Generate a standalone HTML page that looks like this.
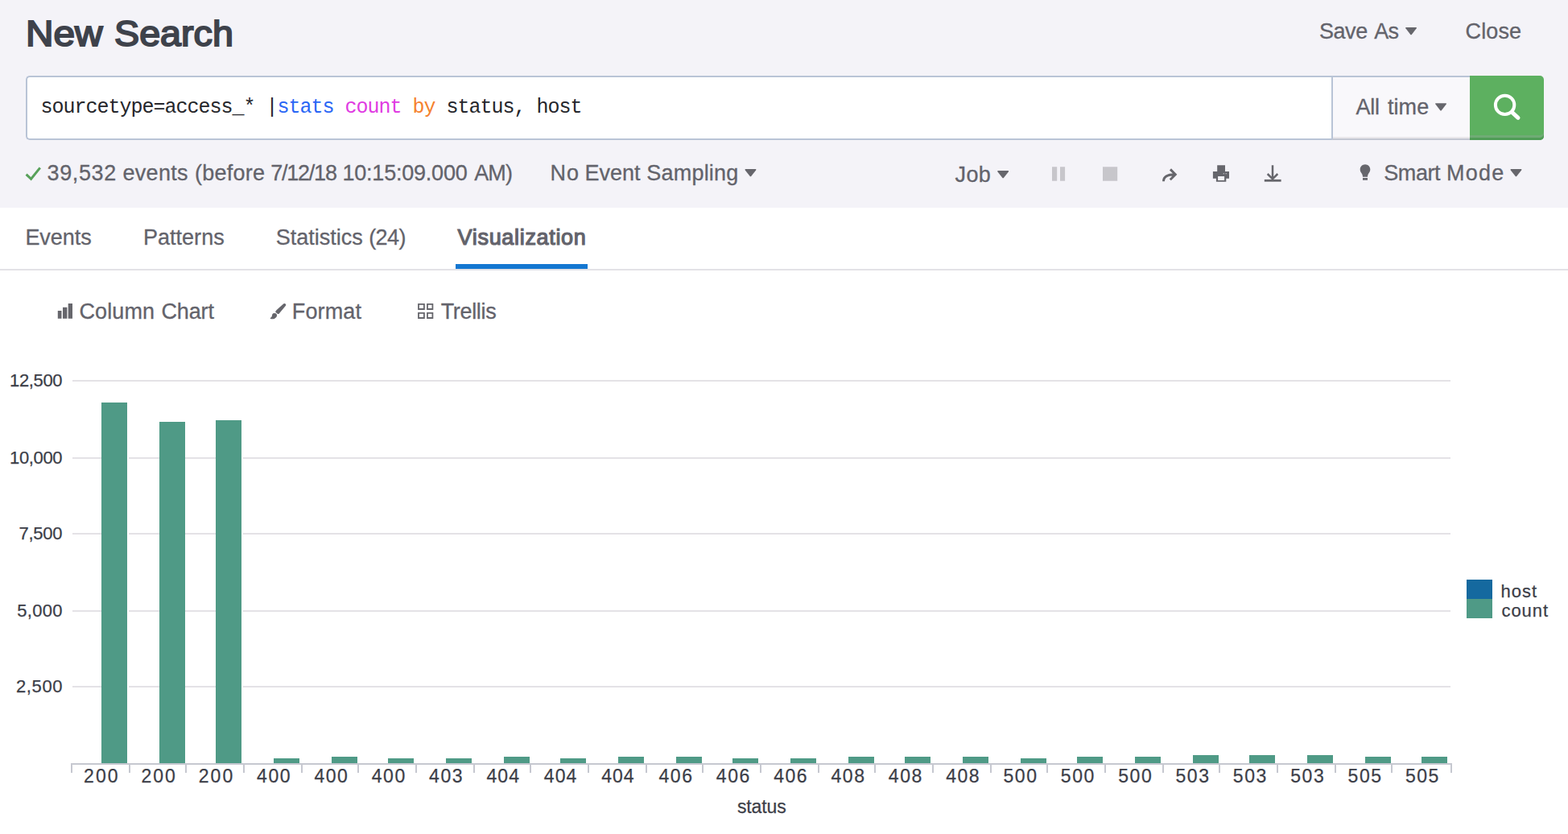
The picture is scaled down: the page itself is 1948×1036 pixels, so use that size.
<!DOCTYPE html>
<html lang="en">
<head>
<meta charset="utf-8">
<title>New Search</title>
<style>
*{box-sizing:border-box}
html,body{margin:0;padding:0}
body{width:1948px;height:1036px;overflow:hidden;background:#fff;font-family:"Liberation Sans", sans-serif;color:#63636b;position:relative}
#app{position:absolute;left:0;top:0;width:1948px;height:1036px;overflow:hidden}
.hdr{position:absolute;left:0;top:0;width:1948px;height:258px;background:#f4f3f8}
.t{position:absolute;margin:0;padding:0;line-height:1;white-space:nowrap;font-weight:400;color:#63636b;text-decoration:none;-webkit-text-stroke:.3px currentColor}
.g{left:0}
.w{position:absolute;top:0;white-space:nowrap;transform-origin:0 0}
h1.t{color:#3e424b;-webkit-text-stroke:2px currentColor}
.active{-webkit-text-stroke:1.2px currentColor}
.icons{position:absolute;left:0;top:0;display:block;pointer-events:none}
.searchbar{position:absolute;left:32px;top:94px;width:1886px;height:80px}
.sb-input{position:absolute;left:0;top:0;width:1624px;height:80px;background:#fff;border:2px solid #b9c4d6;border-right:0;border-radius:5px 0 0 5px}
.sb-time{position:absolute;left:1622px;top:0;width:172px;height:80px;background:#f9f8fb;border:2px solid #b9c4d6;border-right:0;border-bottom-color:#c3c7d2;box-shadow:inset 0 -2px 0 #e9e7ea}
.sb-go{position:absolute;left:1794px;top:0;width:92px;height:80px;background:#5db060;border:0;border-radius:0 5px 5px 0;box-shadow:inset 0 -3px 0 #4f9d56,inset 0 -6px 0 #70ab75;padding:0}
.q{color:#25262b;font-family:"Liberation Mono", monospace;-webkit-text-stroke:0}
.k1{color:#2966f5}.k2{color:#e03be2}.k3{color:#f5822f}
.tabs{position:absolute;left:0;top:258px;width:1948px;height:78px;background:#fff;border-bottom:2px solid #e3e2e6}
.tabs .ul{position:absolute;left:566px;top:70px;width:164px;height:6px;background:#1477d1}
.chart{position:absolute;left:0;top:440px}
</style>
</head>
<body>
<div id="app">
<header class="hdr">
<h1 class="t title g" style="top:19px;font-size:45px;"><span class="w" style="left:32.32px;transform:scaleX(1.0614);">New</span> <span class="w" style="left:142.43px;transform:scaleX(1.0371);">Search</span></h1>
<div class="actions">
<a class="t lnk g" style="top:26px;font-size:27px;"><span class="w" style="left:1638.9px;letter-spacing:-0.408px;">Save</span> <span class="w" style="left:1707.2px;letter-spacing:-0.709px;">As</span></a>
<a class="t lnk" style="left:1820.6px;letter-spacing:0.097px;top:26px;font-size:27px;">Close</a>
</div>
<div class="searchbar">
<div class="sb-input"></div>
<div class="sb-time"></div>
<button class="sb-go" aria-label="Search"></button>
</div>
<div class="t q" style="left:50.4px;top:121px;font-size:25px;letter-spacing:-1.002px">sourcetype=access_* |<span class="k1">stats</span> <span class="k2">count</span> <span class="k3">by</span> status, host</div>
<a class="t lnk g" style="top:120px;font-size:27px;"><span class="w" style="left:1684.6px;letter-spacing:-0.354px;">All</span> <span class="w" style="left:1723.9px;letter-spacing:0.103px;">time</span></a>
<div class="jobbar">
<span class="t status g" style="top:202px;font-size:27px;"><span class="w" style="left:58.5px;letter-spacing:0.627px;">39,532</span> <span class="w" style="left:152.5px;letter-spacing:0.29px;">events</span> <span class="w" style="left:242.1px;letter-spacing:0.228px;">(before</span> <span class="w" style="left:336.2px;letter-spacing:-1.228px;">7/12/18</span> <span class="w" style="left:425.5px;letter-spacing:-0.221px;">10:15:09.000</span> <span class="w" style="left:589.3px;letter-spacing:-0.95px;">AM)</span></span>
<a class="t lnk g" style="top:202px;font-size:27px;"><span class="w" style="left:683.6px;letter-spacing:1.001px;">No</span> <span class="w" style="left:726.4px;letter-spacing:0.015px;">Event</span> <span class="w" style="left:803.3px;letter-spacing:0.208px;">Sampling</span></a>
<a class="t lnk" style="left:1186.6px;letter-spacing:0.292px;top:204px;font-size:27px;">Job</a>
<a class="t lnk g" style="top:202px;font-size:27px;"><span class="w" style="left:1719.2px;letter-spacing:-0.402px;">Smart</span> <span class="w" style="left:1796.9px;letter-spacing:1.292px;">Mode</span></a>
</div>
</header>
<nav class="tabs"><div class="ul"></div></nav>
<div class="tablabels">
<a class="t tab" style="left:31.4px;letter-spacing:-0.028px;top:282px;font-size:27px;">Events</a>
<a class="t tab" style="left:177.9px;letter-spacing:0.036px;top:282px;font-size:27px;">Patterns</a>
<a class="t tab g" style="top:282px;font-size:27px;"><span class="w" style="left:342.7px;">Statistics</span> <span class="w" style="left:458.2px;letter-spacing:-0.574px;">(24)</span></a>
<a class="t tab active" style="left:568.6px;letter-spacing:0.677px;top:282px;font-size:27px;">Visualization</a>
</div>
<div class="viz-controls">
<a class="t lnk g" style="top:374px;font-size:27px;"><span class="w" style="left:98.5px;letter-spacing:0.116px;">Column</span> <span class="w" style="left:200.4px;letter-spacing:-0.105px;">Chart</span></a>
<a class="t lnk" style="left:362.8px;letter-spacing:0.119px;top:374px;font-size:27px;">Format</a>
<a class="t lnk" style="left:547.7px;letter-spacing:-0.332px;top:374px;font-size:27px;">Trellis</a>
</div>
<svg class="icons" width="1948" height="440" viewBox="0 0 1948 440" aria-hidden="true">
<g fill="#66666c">
<path d="M1746.9 33.9L1759.2 33.9Q1760.6 33.9 1759.7 35.3L1753.95 42.7Q1753.05 43.7 1752.15 42.7L1746.4 35.3Q1745.5 33.9 1746.9 33.9Z"/>
<path d="M1783.9 128.2L1796.2 128.2Q1797.6 128.2 1796.7 129.6L1790.95 137Q1790.05 138 1789.15 137L1783.4 129.6Q1782.5 128.2 1783.9 128.2Z"/>
<path d="M926.3 210L938.6 210Q940 210 939.1 211.4L933.35 218.8Q932.45 219.8 931.55 218.8L925.8 211.4Q924.9 210 926.3 210Z"/>
<path d="M1240 212L1252.3 212Q1253.7 212 1252.8 213.4L1247.05 220.8Q1246.15 221.8 1245.25 220.8L1239.5 213.4Q1238.6 212 1240 212Z"/>
<path d="M1877.3 210L1889.6 210Q1891 210 1890.1 211.4L1884.35 218.8Q1883.45 219.8 1882.55 218.8L1876.8 211.4Q1875.9 210 1877.3 210Z"/>
<path d="M1512.2 205.2h9.8v7.7h5v8.9h-3.7v3.9h-12.4v-3.9h-4v-8.9h5.3zM1513.1 219v5h8v-5z"/>
<path d="M1696 204.2c3.5 0 6.3 2.8 6.3 6.3 0 1.8-.8 3.2-1.7 4.5-.9 1.4-1.5 2.7-1.6 4.7h-6c-.1-2-.7-3.3-1.6-4.7-.9-1.3-1.7-2.7-1.7-4.5 0-3.5 2.8-6.3 6.3-6.3zM1693 221.1h6v2.6h-6z"/>
<path d="M71.8 386h4.7v9.8h-4.7zM78 381.7h5.4v14.1H78zM84.7 377h5.3v18.8h-5.3z"/>
<path d="M342 387.4C343 385.6 344.6 384 347 382L352.4 377.2Q354 376.3 355.1 378.1Q355.6 379 354.7 380.1L346.6 389.7Q345.6 390.2 344.7 389.7ZM339.3 389.3Q341.2 388.5 342.6 389.3Q344.4 390.4 344.1 392.3Q343.8 394.8 340.8 395.9Q338 396.4 336 395.9Q335.5 395.4 335.8 394.9Q337.4 394 337.8 392.8Q338 390.2 339.3 389.3Z"/>
</g>
<path fill="#b4b4ba" d="M1519.7 215h1.3v1.3h-1.3zM1522.6 215h1.3v1.3h-1.3z"/>
<path fill="#c7c6cb" d="M1307 207.3h6.2v17.5h-6.2zM1317 207.3h6.1v17.5h-6.1zM1370 207.3h18.2v17.5h-18.2z"/>
<path fill="none" stroke="#58a15a" stroke-width="3" d="M32.6 216.6 38.6 222.3 49.8 208.4"/>
<path fill="none" stroke="#66666c" stroke-width="2.9" d="M1445.5 225.2C1445.5 219.6 1449.5 216.7 1459.5 216.7M1454 210.4 1460.3 216.7 1453.8 223.2"/>
<path fill="none" stroke="#66666c" stroke-width="2.5" d="M1581 205.2v16.5M1574.7 216 1581 222.3 1587.3 216"/>
<path fill="#66666c" d="M1570.8 222.9h20.8v2.8h-20.8z"/>
<path fill="none" stroke="#66666c" stroke-width="1.8" d="M520 377.9h6.9v6.1H520zM531 377.9h6.4v6.1H531zM520 388.9h6.9v6.1H520zM531 388.9h6.4v6.1H531z"/>
<circle cx="1869.6" cy="130.4" r="11.7" fill="none" stroke="#fff" stroke-width="4"/>
<path d="M1878.4 139.4 1886 146.3" stroke="#fff" stroke-width="5" stroke-linecap="round"/>
</svg>
<svg class="chart" width="1948" height="596" viewBox="0 440 1948 596" font-family='"Liberation Sans", sans-serif' fill="#3c3e48" stroke="#3c3e48" stroke-width=".25" role="img" aria-label="Column chart of count by status">
<g class="grid" fill="#e4e2e6" stroke="none">
<rect x="90" y="472" width="1712" height="2"/>
<rect x="90" y="568" width="1712" height="2"/>
<rect x="90" y="662" width="1712" height="2"/>
<rect x="90" y="758" width="1712" height="2"/>
<rect x="90" y="852" width="1712" height="2"/>
</g>
<g class="y-labels" font-size="22">
<text x="12.1" y="480" letter-spacing="-0.371">12,500</text>
<text x="12.1" y="576" letter-spacing="-0.371">10,000</text>
<text x="23.4" y="670" letter-spacing="-0.23">7,500</text>
<text x="21.3" y="766" letter-spacing="0.295">5,000</text>
<text x="19.9" y="860" letter-spacing="0.645">2,500</text>
</g>
<g class="bars" fill="#4f9a86" stroke="none">
<rect x="126" y="500" width="32" height="448"/>
<rect x="198" y="524" width="32" height="424"/>
<rect x="268" y="522" width="32" height="426"/>
<rect x="340" y="942" width="32" height="6"/>
<rect x="412" y="940" width="32" height="8"/>
<rect x="482" y="942" width="32" height="6"/>
<rect x="554" y="942" width="32" height="6"/>
<rect x="626" y="940" width="32" height="8"/>
<rect x="696" y="942" width="32" height="6"/>
<rect x="768" y="940" width="32" height="8"/>
<rect x="840" y="940" width="32" height="8"/>
<rect x="910" y="942" width="32" height="6"/>
<rect x="982" y="942" width="32" height="6"/>
<rect x="1054" y="940" width="32" height="8"/>
<rect x="1124" y="940" width="32" height="8"/>
<rect x="1196" y="940" width="32" height="8"/>
<rect x="1268" y="942" width="32" height="6"/>
<rect x="1338" y="940" width="32" height="8"/>
<rect x="1410" y="940" width="32" height="8"/>
<rect x="1482" y="938" width="32" height="10"/>
<rect x="1552" y="938" width="32" height="10"/>
<rect x="1624" y="938" width="32" height="10"/>
<rect x="1696" y="940" width="32" height="8"/>
<rect x="1766" y="940" width="32" height="8"/>
</g>
<path class="bar-gap" fill="#fff" stroke="none" d="M158 500h2v448h-2zM300 522h2v426h-2z"/>
<g class="axis" fill="#c6c8d0" stroke="none">
<rect x="88" y="948" width="1716" height="2"/>
<rect x="88" y="950" width="2" height="10"/>
<rect x="160" y="950" width="2" height="10"/>
<rect x="230" y="950" width="2" height="10"/>
<rect x="302" y="950" width="2" height="10"/>
<rect x="374" y="950" width="2" height="10"/>
<rect x="444" y="950" width="2" height="10"/>
<rect x="516" y="950" width="2" height="10"/>
<rect x="588" y="950" width="2" height="10"/>
<rect x="658" y="950" width="2" height="10"/>
<rect x="730" y="950" width="2" height="10"/>
<rect x="802" y="950" width="2" height="10"/>
<rect x="872" y="950" width="2" height="10"/>
<rect x="944" y="950" width="2" height="10"/>
<rect x="1016" y="950" width="2" height="10"/>
<rect x="1086" y="950" width="2" height="10"/>
<rect x="1158" y="950" width="2" height="10"/>
<rect x="1230" y="950" width="2" height="10"/>
<rect x="1300" y="950" width="2" height="10"/>
<rect x="1372" y="950" width="2" height="10"/>
<rect x="1444" y="950" width="2" height="10"/>
<rect x="1514" y="950" width="2" height="10"/>
<rect x="1586" y="950" width="2" height="10"/>
<rect x="1658" y="950" width="2" height="10"/>
<rect x="1728" y="950" width="2" height="10"/>
<rect x="1802" y="950" width="2" height="10"/>
</g>
<g class="x-labels" font-size="23">
<text x="104.07" y="972" letter-spacing="2.058">200</text>
<text x="175.41" y="972" letter-spacing="2.058">200</text>
<text x="246.75" y="972" letter-spacing="2.058">200</text>
<text x="319.09" y="972" letter-spacing="1.558">400</text>
<text x="390.43" y="972" letter-spacing="1.558">400</text>
<text x="461.77" y="972" letter-spacing="1.558">400</text>
<text x="533.11" y="972" letter-spacing="1.558">403</text>
<text x="604.45" y="972" letter-spacing="1.058">404</text>
<text x="675.79" y="972" letter-spacing="1.058">404</text>
<text x="747.13" y="972" letter-spacing="1.058">404</text>
<text x="818.47" y="972" letter-spacing="1.558">406</text>
<text x="889.81" y="972" letter-spacing="1.558">406</text>
<text x="961.15" y="972" letter-spacing="1.558">406</text>
<text x="1032.49" y="972" letter-spacing="1.558">408</text>
<text x="1103.83" y="972" letter-spacing="1.558">408</text>
<text x="1175.17" y="972" letter-spacing="1.558">408</text>
<text x="1246.51" y="972" letter-spacing="1.558">500</text>
<text x="1317.85" y="972" letter-spacing="1.558">500</text>
<text x="1389.19" y="972" letter-spacing="1.558">500</text>
<text x="1460.53" y="972" letter-spacing="1.558">503</text>
<text x="1531.87" y="972" letter-spacing="1.558">503</text>
<text x="1603.21" y="972" letter-spacing="1.558">503</text>
<text x="1674.55" y="972" letter-spacing="1.558">505</text>
<text x="1745.89" y="972" letter-spacing="1.558">505</text>
</g>
<g class="x-title" font-size="23"><text x="915.9" y="1010" letter-spacing="-0.113">status</text></g>
<g class="legend" font-size="22">
<rect x="1822" y="720" width="32" height="24" fill="#15699f" stroke="none"/>
<rect x="1822" y="744" width="32" height="24" fill="#4f9a86" stroke="none"/>
<text x="1864.5" y="742" letter-spacing="1.01">host</text>
<text x="1865.5" y="766" letter-spacing="0.923">count</text>
</g>
</svg>
</div>
</body>
</html>
